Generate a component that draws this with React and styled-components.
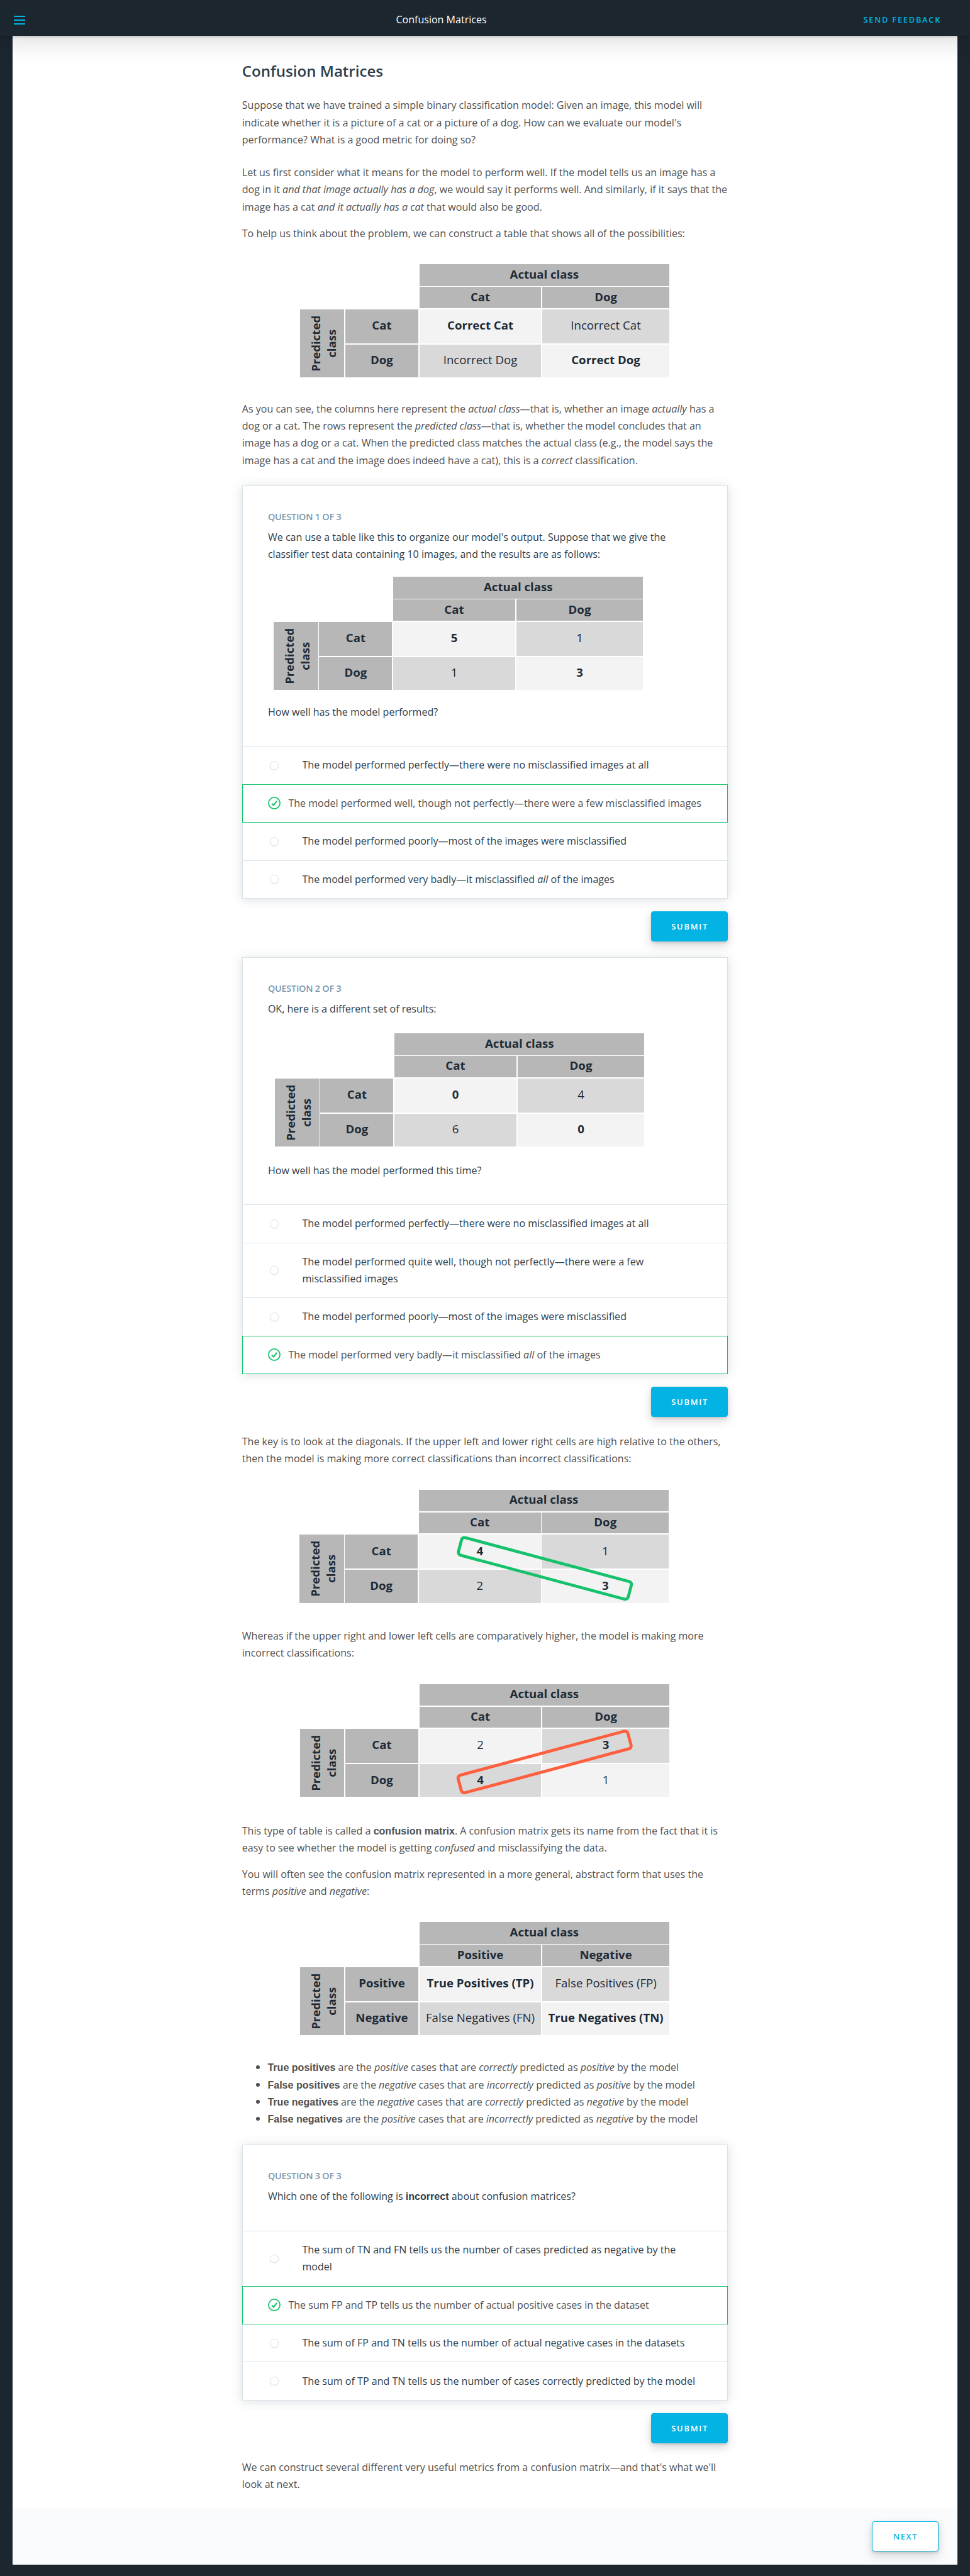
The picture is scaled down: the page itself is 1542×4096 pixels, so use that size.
import React from 'react';
import styled, { createGlobalStyle, css } from 'styled-components';

/* 1rem = 10 design units, scaled for the window */
const GlobalStyle = createGlobalStyle`
  html {
    font-size: 8.03px;
  }
  *, *::before, *::after {
    box-sizing: border-box;
  }
  body {
    margin: 0;
    background: #1c262f;
    color: #4f4f4f;
    font-family: 'Open Sans', sans-serif;
    font-size: 2rem;
    line-height: 3.4rem;
  }
`;

const BLUE = '#02b3e4';
const GREEN = '#15c26b';
const RED = '#fe5f3e';
const INK = '#2e3d49';
const LINE = '#dbe2e8';

const Page = styled.div`
  display: flex;
  flex-direction: column;
  height: 4096px;
  overflow: hidden;
`;

const Header = styled.header`
  position: relative;
  z-index: 1;
  display: flex;
  align-items: center;
  flex: none;
  height: 7.1rem;
  padding: 0.9rem 5.7rem 0 2.8rem;
  background: #1c262f;
  box-shadow: 0 0.2rem 0.4rem rgba(0, 0, 0, 0.15), 0 1rem 5rem rgba(0, 0, 0, 0.15);
`;

const MenuButton = styled.button`
  display: flex;
  flex-direction: column;
  justify-content: space-between;
  width: 2.2rem;
  height: 1.8rem;
  padding: 0;
  border: 0;
  background: none;
`;

const MenuBar = styled.span`
  display: block;
  height: 2px;
  background: ${BLUE};
`;

const HeaderTitle = styled.div`
  flex: 1;
  color: #fff;
  text-align: center;
`;

const Feedback = styled.a`
  width: 16.6rem;
  color: ${BLUE};
  font-size: 1.6rem;
  font-weight: 600;
  letter-spacing: 0.22rem;
  text-align: right;
  white-space: nowrap;
`;

const Panel = styled.main`
  display: flex;
  flex-direction: column;
  flex: 1;
  margin: 0 2.5rem 2.3rem;
  background: #fff;
`;

const Article = styled.article`
  display: flex;
  flex-direction: column;
  flex: 1;
  width: 96.2rem;
  margin: 0 auto;
  padding-top: 4.94rem;

  strong {
    font-family: 'Liberation Sans', Arial, sans-serif;
    font-weight: 700;
  }
`;

const Heading = styled.h1`
  margin: 0;
  color: ${INK};
  font-size: 3rem;
  font-weight: 600;
  line-height: 4rem;
`;

const Paragraph = styled.p`
  margin: ${(p) => p.$top + 0.08}rem 0 -0.08rem;
`;

const List = styled.ul`
  margin: 4.77rem 0 -0.08rem;
  padding: 0 0 0 5.1rem;
  list-style: none;
`;

const ListItem = styled.li`
  display: flex;
  align-items: center;
  height: 3.4rem;
  white-space: pre;

  &::before {
    content: '';
    width: 0.75rem;
    height: 0.75rem;
    margin: -0.2rem 1.5rem 0 -2.28rem;
    border-radius: 50%;
    background: #4f4f4f;
  }
`;

const Figure = styled.div`
  position: relative;
  display: grid;
  grid-template-columns: 8.8rem 14.45rem 24.15rem 25.15rem;
  grid-template-rows: 4.28rem 4.16rem 6.73rem 6.54rem;
  gap: 0.23rem 0.2rem;
  width: max-content;
  margin: ${(p) => p.$top}rem 0 0 ${(p) => p.$left}rem;
  color: #1e2b36;
  font-size: 2.32rem;
`;

const tones = {
  head: css`
    background: #b7b7b7;
    font-weight: 700;
  `,
  light: css`
    background: #f3f3f3;
  `,
  mid: css`
    background: #d9d9d9;
  `,
};

const Cell = styled.div`
  display: flex;
  align-items: center;
  justify-content: center;
  padding-bottom: 0.5rem;
  white-space: nowrap;
  ${(p) => tones[p.$tone]}
  ${(p) => p.$bold && 'font-weight: 700;'}
  ${(p) => p.$column && `grid-column: ${p.$column};`}
`;

const SideCell = styled.div`
  display: flex;
  align-items: center;
  justify-content: center;
  grid-column: 1;
  grid-row: 3 / span 2;
  padding-left: 0.5rem;
  ${tones.head}
`;

const SideText = styled.div`
  flex: none;
  width: 13rem;
  line-height: 3.15rem;
  text-align: center;
  transform: rotate(-90deg);
`;

const Mark = styled.svg`
  position: absolute;
  inset: 0;
  width: 100%;
  height: 100%;
  fill: none;
  stroke-width: 6;
  stroke: ${(p) => p.$color};
`;

function Matrix({ top, left = 11.45, labels = ['Cat', 'Dog'], values, bold = 'main', mark }) {
  const [first, second] = labels;
  const main = bold === 'main';
  return (
    <Figure $top={top} $left={left}>
      <Cell $tone="head" $column="3 / span 2">Actual class</Cell>
      <Cell $tone="head" $column="3">{first}</Cell>
      <Cell $tone="head">{second}</Cell>
      <SideCell>
        <SideText>Predicted<br />class</SideText>
      </SideCell>
      <Cell $tone="head">{first}</Cell>
      <Cell $tone="light" $bold={main}>{values[0]}</Cell>
      <Cell $tone="mid" $bold={!main}>{values[1]}</Cell>
      <Cell $tone="head">{second}</Cell>
      <Cell $tone="mid" $bold={!main}>{values[2]}</Cell>
      <Cell $tone="light" $bold={main}>{values[3]}</Cell>
      {mark && (
        <Mark viewBox="0 0 731.5 224" $color={mark === 'down' ? GREEN : RED}>
          <rect
            x="-174"
            y="-18"
            width="348"
            height="36"
            rx="6"
            transform={`translate(${mark === 'down' ? 486 : 484.2} ${mark === 'down' ? 155.5 : 154}) rotate(${mark === 'down' ? 15 : -15})`}
          />
        </Mark>
      )}
    </Figure>
  );
}

const Card = styled.section`
  margin-top: ${(p) => p.$top}rem;
  border: 1px solid ${LINE};
  background: #fff;
  box-shadow: 0 0.3rem 2rem rgba(46, 60, 73, 0.18);
  color: ${INK};
`;

const CardBody = styled.div`
  display: flex;
  flex-direction: column;
  padding: 4.88rem 5rem ${(p) => p.$bottom}rem;
`;

const Label = styled.div`
  margin-bottom: 1.12rem;
  color: #7d97ad;
  font-size: 1.8rem;
  font-weight: 600;
  letter-spacing: -0.03rem;
  line-height: 2.4rem;
`;

const CorrectOption = styled.div`
  display: flex;
  align-items: center;
  gap: 1.5rem;
  margin: 0 -1px;
  padding: 2rem 0 2rem 5.05rem;
  border: 1px solid ${GREEN};
  color: #4f4f4f;
  white-space: nowrap;

  &:last-child {
    margin-bottom: -1px;
  }
`;

const Option = styled.label`
  display: flex;
  align-items: center;
  gap: 4.7rem;
  padding: 2rem 5rem 2rem 5.4rem;
  border-top: 1px solid ${LINE};

  ${CorrectOption} + & {
    border-top: 0;
  }
`;

const Radio = styled.span`
  flex: none;
  width: 1.7rem;
  height: 1.7rem;
  border: 1px solid ${LINE};
  border-radius: 50%;
  box-shadow: 0 0.1rem 0.2rem rgba(46, 60, 73, 0.1);
`;

const CheckSvg = styled.svg`
  flex: none;
  width: 2.5rem;
  height: 2.5rem;
  fill: none;
  stroke: ${GREEN};
`;

function CheckIcon() {
  return (
    <CheckSvg viewBox="0 0 25 25">
      <circle cx="12.5" cy="12.5" r="11.3" strokeWidth="2.2" />
      <path d="M7.6 13.2l3.4 3.5 6.5-8.2" strokeWidth="2.6" />
    </CheckSvg>
  );
}

function Options({ items, correct }) {
  return items.map((text, i) =>
    i === correct ? (
      <CorrectOption key={i}>
        <CheckIcon />
        <span>{text}</span>
      </CorrectOption>
    ) : (
      <Option key={i}>
        <Radio />
        <span>{text}</span>
      </Option>
    )
  );
}

const Button = styled.button`
  display: flex;
  align-items: center;
  justify-content: center;
  flex: none;
  width: ${(p) => (p.$outline ? '13.2rem' : '15.2rem')};
  height: 6rem;
  padding: 0 0 0 0.1rem;
  border: 1px solid ${BLUE};
  border-radius: 0.5rem;
  background: ${(p) => (p.$outline ? '#fff' : BLUE)};
  box-shadow: 0 0.2rem 0.5rem rgba(0, 0, 0, 0.12), 0 0.8rem 2rem rgba(0, 0, 0, 0.16);
  color: ${(p) => (p.$outline ? BLUE : '#fff')};
  font-family: inherit;
  font-size: 1.6rem;
  font-weight: 600;
  letter-spacing: 0.22rem;
`;

const Actions = styled.div`
  display: flex;
  justify-content: flex-end;
  margin-top: 2.5rem;
`;

const Footer = styled.footer`
  display: flex;
  align-items: center;
  justify-content: flex-end;
  height: 11rem;
  padding-right: 3.7rem;
  background: #fafbfc;
`;

export default function App() {
  return (
    <Page>
      <GlobalStyle />
      <Header>
        <MenuButton aria-label="Menu">
          <MenuBar />
          <MenuBar />
          <MenuBar />
        </MenuButton>
        <HeaderTitle>Confusion Matrices</HeaderTitle>
        <Feedback>SEND FEEDBACK</Feedback>
      </Header>
      <Panel>
        <Article>
          <Heading>Confusion Matrices</Heading>
          <Paragraph $top={3.11}>
            Suppose that we have trained a simple binary classification model: Given an image, this model will
            indicate whether it is a picture of a cat or a picture of a dog. How can we evaluate our model's
            performance? What is a good metric for doing so?
          </Paragraph>
          <Paragraph $top={3.07}>
            Let us first consider what it means for the model to perform well. If the model tells us an image has a
            dog in it <em>and that image actually has a dog</em>, we would say it performs well. And similarly, if it
            says that the image has a cat <em>and it actually has a cat</em> that would also be good.
          </Paragraph>
          <Paragraph $top={1.9}>
            To help us think about the problem, we can construct a table that shows all of the possibilities:
          </Paragraph>
          <Matrix top={4.43} values={['Correct Cat', 'Incorrect Cat', 'Incorrect Dog', 'Correct Dog']} />
          <Paragraph $top={4.47}>
            As you can see, the columns here represent the <em>actual class</em>—that is, whether an image{' '}
            <em>actually</em> has a dog or a cat. The rows represent the <em>predicted class</em>—that is, whether
            the model concludes that an image has a dog or a cat. When the predicted class matches the actual class
            (e.g., the model says the image has a cat and the image does indeed have a cat), this is a{' '}
            <em>correct</em> classification.
          </Paragraph>

          <Card $top={3.33}>
            <CardBody $bottom={5.08}>
              <Label>QUESTION 1 OF 3</Label>
              <Paragraph $top={0}>
                We can use a table like this to organize our model's output. Suppose that we give the classifier test
                data containing 10 images, and the results are as follows:
              </Paragraph>
              <Matrix top={2.78} left={1.15} values={['5', '1', '1', '3']} />
              <Paragraph $top={2.65}>How well has the model performed?</Paragraph>
            </CardBody>
            <Options
              correct={1}
              items={[
                'The model performed perfectly—there were no misclassified images at all',
                'The model performed well, though not perfectly—there were a few misclassified images',
                'The model performed poorly—most of the images were misclassified',
                <>The model performed very badly—it misclassified <em>all</em> of the images</>,
              ]}
            />
          </Card>
          <Actions>
            <Button>SUBMIT</Button>
          </Actions>

          <Card $top={3.11}>
            <CardBody $bottom={5.11}>
              <Label>QUESTION 2 OF 3</Label>
              <Paragraph $top={0}>OK, here is a different set of results:</Paragraph>
              <Matrix top={3.15} left={1.4} values={['0', '4', '6', '0']} />
              <Paragraph $top={2.97}>How well has the model performed this time?</Paragraph>
            </CardBody>
            <Options
              correct={3}
              items={[
                'The model performed perfectly—there were no misclassified images at all',
                'The model performed quite well, though not perfectly—there were a few misclassified images',
                'The model performed poorly—most of the images were misclassified',
                <>The model performed very badly—it misclassified <em>all</em> of the images</>,
              ]}
            />
          </Card>
          <Actions>
            <Button>SUBMIT</Button>
          </Actions>

          <Paragraph $top={3.11}>
            The key is to look at the diagonals. If the upper left and lower right cells are high relative to the
            others, then the model is making more correct classifications than incorrect classifications:
          </Paragraph>
          <Matrix top={4.48} left={11.35} values={['4', '1', '2', '3']} mark="down" />
          <Paragraph $top={4.8}>
            Whereas if the upper right and lower left cells are comparatively higher, the model is making more
            incorrect classifications:
          </Paragraph>
          <Matrix top={4.46} values={['2', '3', '4', '1']} bold="anti" mark="up" />
          <Paragraph $top={4.94}>
            This type of table is called a <strong>confusion matrix</strong>. A confusion matrix gets its name from
            the fact that it is easy to see whether the model is getting <em>confused</em> and misclassifying the
            data.
          </Paragraph>
          <Paragraph $top={1.8}>
            You will often see the confusion matrix represented in a more general, abstract form that uses the terms{' '}
            <em>positive</em> and <em>negative</em>:
          </Paragraph>
          <Matrix
            top={4.43}
            labels={['Positive', 'Negative']}
            values={['True Positives (TP)', 'False Positives (FP)', 'False Negatives (FN)', 'True Negatives (TN)']}
          />
          <List>
            <ListItem>
              <span><strong>True positives</strong> are the <em>positive</em> cases that are <em>correctly</em> predicted as <em>positive</em> by the model</span>
            </ListItem>
            <ListItem>
              <span><strong>False positives</strong> are the <em>negative</em> cases that are <em>incorrectly</em> predicted as <em>positive</em> by the model</span>
            </ListItem>
            <ListItem>
              <span><strong>True negatives</strong> are the <em>negative</em> cases that are <em>correctly</em> predicted as <em>negative</em> by the model</span>
            </ListItem>
            <ListItem>
              <span><strong>False negatives</strong> are the <em>positive</em> cases that are <em>incorrectly</em> predicted as <em>negative</em> by the model</span>
            </ListItem>
          </List>

          <Card $top={3.31}>
            <CardBody $bottom={5.2}>
              <Label>QUESTION 3 OF 3</Label>
              <Paragraph $top={0}>
                <span>Which one of the following is <strong>incorrect</strong> about confusion matrices?</span>
              </Paragraph>
            </CardBody>
            <Options
              correct={1}
              items={[
                'The sum of TN and FN tells us the number of cases predicted as negative by the model',
                'The sum FP and TP tells us the number of actual positive cases in the dataset',
                'The sum of FP and TN tells us the number of actual negative cases in the datasets',
                'The sum of TP and TN tells us the number of cases correctly predicted by the model',
              ]}
            />
          </Card>
          <Actions>
            <Button>SUBMIT</Button>
          </Actions>
          <Paragraph $top={3.02}>
            We can construct several different very useful metrics from a confusion matrix—and that's what we'll look
            at next.
          </Paragraph>
        </Article>
        <Footer>
          <Button $outline>NEXT</Button>
        </Footer>
      </Panel>
    </Page>
  );
}
